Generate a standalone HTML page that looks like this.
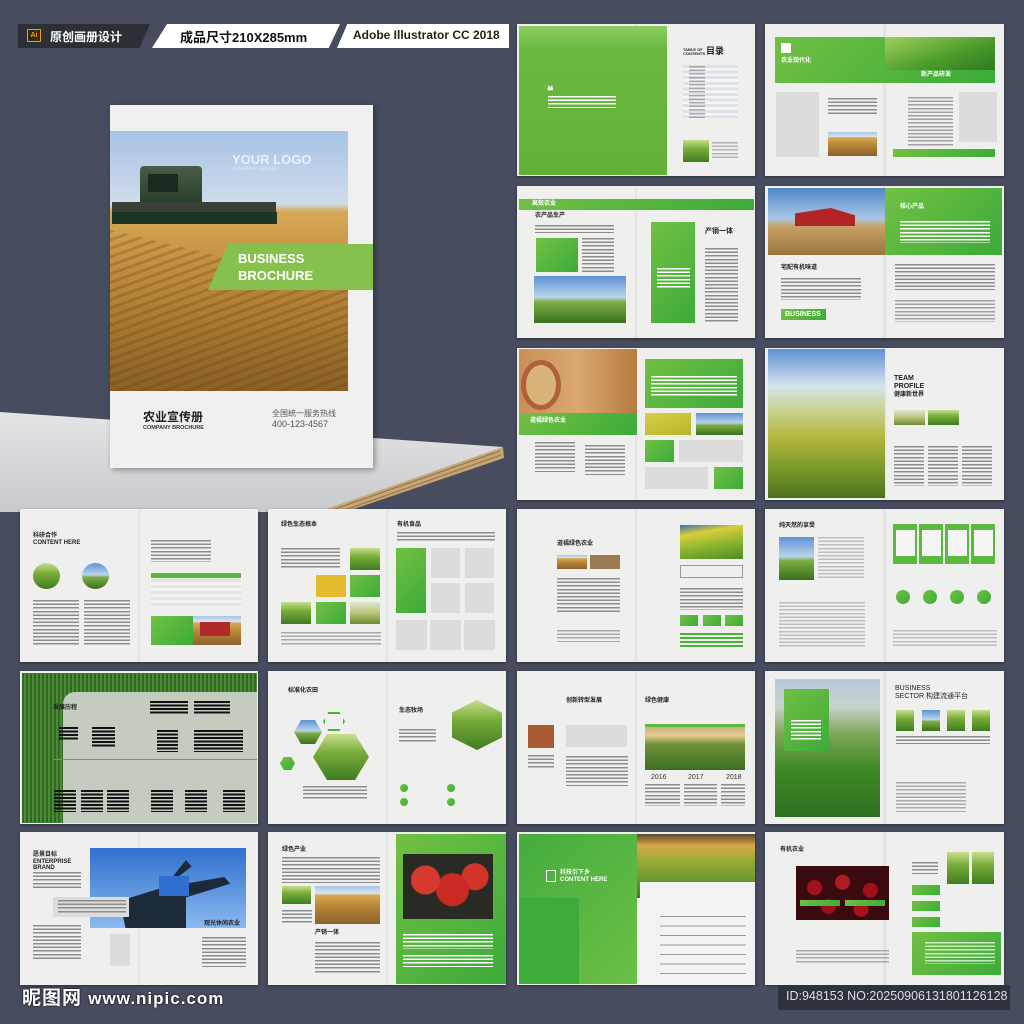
<!DOCTYPE html>
<html><head><meta charset="utf-8"><style>
*{margin:0;padding:0;box-sizing:border-box}
body{width:1024px;height:1024px;background:#474d5e;position:relative;overflow:hidden;font-family:"Liberation Sans","Noto Sans CJK SC",sans-serif}
div{position:absolute}
.s{background:#efefed;box-shadow:0 1px 3px rgba(0,0,0,.4)}
.s:after{content:"";position:absolute;left:49%;top:0;width:2%;height:100%;background:linear-gradient(90deg,rgba(0,0,0,0),rgba(0,0,0,.06),rgba(0,0,0,0))}
.ln{background:repeating-linear-gradient(#8c8c8c 0 1.5px,transparent 1.5px 3.6px)}
.lw{background:repeating-linear-gradient(#fff 0 1.5px,transparent 1.5px 3.6px)}
.bk{background:repeating-linear-gradient(#111 0 2px,transparent 2px 3.5px)}
.g{background:linear-gradient(135deg,#72c043,#3cab3a)}
.gy{background:#dcdcdc}
.t{font-size:6px;font-weight:bold;color:#222;white-space:nowrap;line-height:1.1}
.wheat{background:linear-gradient(#a8c6e6,#d9e4ee 20%,#d8a84e 24%,#b78537 55%,#8b6130)}
.fld{background:linear-gradient(#c9de8f,#79ad3a 40%,#3f7c22)}
.sky{background:linear-gradient(#5e93d4,#bad3ec 45%,#7fae43 55%,#386f20)}
.photo2{background:linear-gradient(#dfe6d0,#b9c57a 50%,#6f8a32)}
</style></head><body>

<!-- header -->
<div style="left:18px;top:24px;width:132px;height:24px;background:#2c2f36;clip-path:polygon(0 0,100% 0,92% 100%,0 100%)"></div>
<div style="left:27px;top:29px;width:14px;height:13px;background:#3a2a10;border:1px solid #f49a1d;color:#f49a1d;font-size:7px;font-weight:bold;text-align:center;line-height:11px">Ai</div>
<div style="left:50px;top:28px;color:#fff;font-size:12px;font-weight:bold">原创画册设计</div>
<div style="left:152px;top:24px;width:188px;height:24px;background:#fff;clip-path:polygon(8% 0,100% 0,94% 100%,0 100%)"></div>
<div style="left:180px;top:27px;color:#111;font-size:13px;font-weight:bold">成品尺寸210X285mm</div>
<div style="left:337px;top:24px;width:172px;height:24px;background:#fff;clip-path:polygon(6% 0,100% 0,100% 100%,0 100%)"></div>
<div style="left:353px;top:28px;color:#2a2210;font-size:12px;font-weight:bold">Adobe Illustrator CC 2018</div>

<!-- table -->
<svg style="position:absolute;left:0;top:0" width="1024" height="1024">
<defs><linearGradient id="tb" x1="0" y1="0" x2="0" y2="1"><stop offset="0" stop-color="#e4e5e7"/><stop offset="1" stop-color="#c9cacd"/></linearGradient></defs>
<polygon points="0,412 503,447 340,512 0,512" fill="url(#tb)"/>
<polygon points="503,447 504,458 345,512 318,512" fill="#c7a673"/>
<line x1="500" y1="451" x2="335" y2="509" stroke="#8a7150" stroke-width="1"/>
<line x1="501" y1="455" x2="342" y2="511" stroke="#8a7150" stroke-width="1"/>
</svg>

<!-- cover -->
<div style="left:110px;top:105px;width:263px;height:363px;background:#f0f0f0;box-shadow:2px 2px 6px rgba(0,0,0,.35)"></div>
<div style="left:110px;top:131px;width:238px;height:260px;background:linear-gradient(#a6c3e6,#d0dcea 28%,#d7aa55 31%,#c49042 50%,#a8782f 75%,#8a6028)"></div>
<div style="left:110px;top:131px;width:238px;height:260px;background:repeating-linear-gradient(160deg,transparent 0 5px,rgba(90,60,20,.25) 5px 8px);clip-path:polygon(0 38%,100% 60%,100% 100%,0 100%)"></div>
<div style="left:140px;top:166px;width:62px;height:40px;background:linear-gradient(#4a5a48,#24402a);border-radius:4px 4px 0 0"></div>
<div style="left:148px;top:174px;width:30px;height:18px;background:#1a2a1e"></div>
<div style="left:112px;top:202px;width:164px;height:10px;background:#3a4038"></div>
<div style="left:112px;top:212px;width:165px;height:12px;background:#1f3524"></div>
<div style="left:232px;top:152px;color:#fff;opacity:.7;font-size:13px;font-weight:bold">YOUR LOGO</div>
<div style="left:234px;top:166px;color:#fff;opacity:.5;font-size:6px">Creative Design</div>
<div style="left:208px;top:244px;width:165px;height:46px;background:#86c04d;clip-path:polygon(12% 0,100% 0,100% 100%,0 100%)"></div>
<div style="left:238px;top:250px;color:#fff;font-size:13px;font-weight:bold;line-height:17px">BUSINESS<br>BROCHURE</div>
<div style="left:143px;top:411px;color:#222;font-size:12px;font-weight:bold;line-height:13px">农业宣传册</div>
<div style="left:143px;top:425px;color:#333;font-size:5.5px;font-weight:bold;line-height:6px">COMPANY BROCHURE</div>
<div style="left:272px;top:409px;color:#555;font-size:8px;line-height:9px">全国统一服务热线</div>
<div style="left:272px;top:419px;color:#555;font-size:9px;line-height:10px">400-123-4567</div>

<!-- S1 -->
<div class="s" style="left:517px;top:24px;width:238px;height:152px"></div>
<div style="left:519px;top:26px;width:148px;height:149px;background:linear-gradient(#8fcc63,#6ab940 15%,#62b23a)"></div>
<div style="left:547px;top:84px;color:#fff;font-size:12px;font-weight:bold">❝</div>
<div class="lw" style="left:548px;top:96px;width:68px;height:12px"></div>
<div class="t" style="left:683px;top:48px;font-size:4px">TABLE OF<br>CONTENTS</div>
<div class="t" style="left:706px;top:47px;font-size:9px">目录</div>
<div style="left:683px;top:65px;width:55px;height:53px;background:repeating-linear-gradient(#dfe1e8 0 3px,#f5f5f5 3px 5.6px)"></div>
<div class="ln" style="left:689px;top:66px;width:16px;height:52px;opacity:.7"></div>
<div style="left:683px;top:140px;width:26px;height:22px" class="fld"></div>
<div class="ln" style="left:712px;top:142px;width:26px;height:18px;opacity:.6"></div>

<!-- S2 -->
<div class="s" style="left:765px;top:24px;width:239px;height:152px"></div>
<div class="g" style="left:775px;top:37px;width:220px;height:46px"></div>
<div style="left:885px;top:37px;width:110px;height:33px;background:linear-gradient(160deg,#9fd05a,#4a9a2a 60%,#2f7a20)"></div>
<div style="left:781px;top:43px;width:10px;height:10px;background:#fff"></div>
<div class="t" style="left:781px;top:58px;color:#fff">农业现代化</div>
<div class="t" style="left:921px;top:72px;color:#fff">新产品研发</div>
<div class="gy" style="left:776px;top:92px;width:43px;height:65px"></div>
<div class="ln" style="left:828px;top:98px;width:49px;height:18px"></div>
<div class="wheat" style="left:828px;top:132px;width:49px;height:24px"></div>
<div class="ln" style="left:908px;top:97px;width:45px;height:50px;opacity:.8"></div>
<div class="gy" style="left:959px;top:92px;width:38px;height:50px"></div>
<div class="g" style="left:893px;top:149px;width:102px;height:8px"></div>

<!-- S3 -->
<div class="s" style="left:517px;top:186px;width:238px;height:152px"></div>
<div class="g" style="left:519px;top:199px;width:235px;height:11px"></div>
<div class="t" style="left:532px;top:201px;color:#fff">高效农业</div>
<div class="t" style="left:535px;top:213px">农产品生产</div>
<div class="ln" style="left:535px;top:225px;width:79px;height:8px"></div>
<div class="g" style="left:536px;top:238px;width:42px;height:34px"></div>
<div class="ln" style="left:582px;top:238px;width:32px;height:34px"></div>
<div class="sky" style="left:534px;top:276px;width:92px;height:47px"></div>
<div class="g" style="left:651px;top:222px;width:44px;height:101px"></div>
<div class="lw" style="left:657px;top:268px;width:33px;height:20px"></div>
<div class="t" style="left:705px;top:228px;font-size:7px">产销一体</div>
<div class="ln" style="left:705px;top:248px;width:33px;height:75px"></div>

<!-- S4 -->
<div class="s" style="left:765px;top:186px;width:239px;height:152px"></div>
<div style="left:768px;top:188px;width:117px;height:67px;background:linear-gradient(#4f86c8,#a9c6e4 45%,#c8a063 58%,#9b7540)"></div>
<div style="left:795px;top:208px;width:60px;height:18px;background:#b32424;clip-path:polygon(0 30%,60% 0,100% 40%,100% 100%,0 100%)"></div>
<div class="g" style="left:885px;top:188px;width:117px;height:67px"></div>
<div class="t" style="left:900px;top:204px;color:#fff">核心产品</div>
<div class="lw" style="left:900px;top:221px;width:90px;height:22px"></div>
<div class="t" style="left:781px;top:265px">宅配有机味道</div>
<div class="ln" style="left:781px;top:278px;width:80px;height:22px"></div>
<div class="g" style="left:781px;top:309px;width:45px;height:11px"></div>
<div class="t" style="left:785px;top:311px;color:#fff;font-size:7px">BUSINESS</div>
<div class="ln" style="left:895px;top:264px;width:100px;height:26px"></div>
<div class="ln" style="left:895px;top:300px;width:100px;height:22px;opacity:.8"></div>

<!-- S5 -->
<div class="s" style="left:517px;top:348px;width:238px;height:152px"></div>
<div style="left:519px;top:349px;width:118px;height:64px;background:linear-gradient(90deg,#c89055,#d9a870 50%,#b67b3f)"></div>
<div style="left:521px;top:360px;width:40px;height:50px;border-radius:50%;background:#d9b47a;border:5px solid #b0603a"></div>
<div class="g" style="left:519px;top:413px;width:118px;height:22px"></div>
<div class="t" style="left:530px;top:418px;color:#fff">道福绿色农业</div>
<div class="ln" style="left:535px;top:442px;width:40px;height:30px"></div>
<div class="ln" style="left:585px;top:445px;width:40px;height:30px"></div>
<div class="g" style="left:645px;top:359px;width:98px;height:49px"></div>
<div class="lw" style="left:651px;top:376px;width:86px;height:20px"></div>
<div style="left:645px;top:413px;width:46px;height:22px;background:linear-gradient(160deg,#d7d04a,#b5b52a)"></div>
<div class="sky" style="left:696px;top:413px;width:47px;height:22px"></div>
<div class="g" style="left:645px;top:440px;width:29px;height:22px"></div>
<div class="gy" style="left:679px;top:440px;width:64px;height:22px"></div>
<div class="gy" style="left:645px;top:467px;width:63px;height:22px"></div>
<div class="g" style="left:714px;top:467px;width:29px;height:22px"></div>

<!-- S6 -->
<div class="s" style="left:765px;top:348px;width:239px;height:152px"></div>
<div style="left:768px;top:349px;width:117px;height:149px;background:linear-gradient(#5f92cf,#d7e4ef 25%,#c9d494 40%,#b3b63c 60%,#7a9a2a 80%,#4c6f20)"></div>
<div class="t" style="left:894px;top:375px;font-size:7px">TEAM<br>PROFILE</div>
<div class="t" style="left:894px;top:392px">健康新世界</div>
<div class="photo2" style="left:894px;top:410px;width:31px;height:15px"></div>
<div class="fld" style="left:928px;top:410px;width:31px;height:15px"></div>
<div class="ln" style="left:894px;top:446px;width:30px;height:40px"></div>
<div class="ln" style="left:928px;top:446px;width:30px;height:40px"></div>
<div class="ln" style="left:962px;top:446px;width:30px;height:40px"></div>

<!-- S7 -->
<div class="s" style="left:20px;top:509px;width:238px;height:153px"></div>
<div class="t" style="left:33px;top:533px">科研合作<br>CONTENT HERE</div>
<div class="fld" style="left:33px;top:563px;width:27px;height:26px;border-radius:50%"></div>
<div class="sky" style="left:82px;top:563px;width:27px;height:26px;border-radius:50%"></div>
<div class="ln" style="left:33px;top:600px;width:46px;height:45px"></div>
<div class="ln" style="left:84px;top:600px;width:46px;height:45px"></div>
<div class="ln" style="left:151px;top:540px;width:60px;height:22px"></div>
<div style="left:151px;top:573px;width:90px;height:5px;background:#5db63c"></div>
<div style="left:151px;top:579px;width:90px;height:30px;background:repeating-linear-gradient(#e4e4e4 0 3px,#f3f3f3 3px 6px)"></div>
<div class="g" style="left:151px;top:616px;width:42px;height:29px"></div>
<div class="wheat" style="left:193px;top:616px;width:48px;height:29px"></div>
<div style="left:200px;top:622px;width:30px;height:14px;background:#b02a2a"></div>

<!-- S8 -->
<div class="s" style="left:268px;top:509px;width:238px;height:153px"></div>
<div class="t" style="left:281px;top:522px">绿色生态根本</div>
<div class="ln" style="left:281px;top:548px;width:59px;height:20px"></div>
<div class="fld" style="left:350px;top:548px;width:30px;height:22px"></div>
<div style="left:316px;top:575px;width:30px;height:22px;background:#e4bb2c"></div>
<div class="g" style="left:350px;top:575px;width:30px;height:22px"></div>
<div class="fld" style="left:281px;top:602px;width:30px;height:22px"></div>
<div class="g" style="left:316px;top:602px;width:30px;height:22px"></div>
<div class="photo2" style="left:350px;top:602px;width:30px;height:22px"></div>
<div class="ln" style="left:281px;top:632px;width:100px;height:14px;opacity:.7"></div>
<div class="t" style="left:397px;top:522px">有机食品</div>
<div class="ln" style="left:397px;top:532px;width:98px;height:10px"></div>
<div class="g" style="left:396px;top:548px;width:30px;height:65px"></div>
<div class="gy" style="left:431px;top:548px;width:29px;height:30px"></div>
<div class="gy" style="left:465px;top:548px;width:29px;height:30px"></div>
<div class="gy" style="left:431px;top:583px;width:29px;height:30px"></div>
<div class="gy" style="left:465px;top:583px;width:29px;height:30px"></div>
<div class="gy" style="left:396px;top:620px;width:31px;height:30px"></div>
<div class="gy" style="left:430px;top:620px;width:31px;height:30px"></div>
<div class="gy" style="left:464px;top:620px;width:31px;height:30px"></div>

<!-- S9 -->
<div class="s" style="left:517px;top:509px;width:238px;height:153px"></div>
<div class="t" style="left:557px;top:541px">道福绿色农业</div>
<div class="wheat" style="left:557px;top:555px;width:30px;height:14px"></div>
<div style="left:590px;top:555px;width:30px;height:14px;background:#9b7c52"></div>
<div class="ln" style="left:557px;top:578px;width:63px;height:36px"></div>
<div class="ln" style="left:557px;top:630px;width:63px;height:12px;opacity:.7"></div>
<div style="left:680px;top:525px;width:63px;height:34px;background:linear-gradient(170deg,#3d6fb4,#d7cf3a 25%,#8ab330 60%,#4e8a25)"></div>
<div style="left:680px;top:565px;width:63px;height:13px;border:1px solid #999"></div>
<div class="ln" style="left:680px;top:588px;width:63px;height:22px"></div>
<div class="g" style="left:680px;top:615px;width:18px;height:11px"></div>
<div class="g" style="left:703px;top:615px;width:18px;height:11px"></div>
<div class="g" style="left:725px;top:615px;width:18px;height:11px"></div>
<div style="left:680px;top:633px;width:63px;height:16px;background:repeating-linear-gradient(#4bb03c 0 2px,transparent 2px 4px)"></div>

<!-- S10 -->
<div class="s" style="left:765px;top:509px;width:239px;height:153px"></div>
<div class="t" style="left:779px;top:523px">纯天然的享受</div>
<div class="sky" style="left:779px;top:537px;width:35px;height:43px"></div>
<div class="ln" style="left:818px;top:537px;width:46px;height:43px;opacity:.5"></div>
<div class="ln" style="left:779px;top:602px;width:86px;height:45px;opacity:.5"></div>
<div style="left:893px;top:524px;width:104px;height:40px;background:repeating-linear-gradient(90deg,#5cb83f 0 24px,transparent 24px 26px)"></div>
<div style="left:896px;top:530px;width:98px;height:26px;background:repeating-linear-gradient(90deg,#f4f4f4 0 19px,transparent 19px 26px)"></div>
<div class="g" style="left:896px;top:590px;width:14px;height:14px;border-radius:50%"></div>
<div class="g" style="left:923px;top:590px;width:14px;height:14px;border-radius:50%"></div>
<div class="g" style="left:950px;top:590px;width:14px;height:14px;border-radius:50%"></div>
<div class="g" style="left:977px;top:590px;width:14px;height:14px;border-radius:50%"></div>
<div class="ln" style="left:893px;top:630px;width:104px;height:18px;opacity:.5"></div>

<!-- S11 -->
<div class="s" style="left:20px;top:671px;width:238px;height:153px"></div>
<div style="left:22px;top:673px;width:235px;height:150px;background:repeating-linear-gradient(90deg,#2f6a25 0 2px,#4e8a35 2px 4px)"></div>
<div style="left:63px;top:692px;width:194px;height:131px;background:#c4ccc0;border-radius:12px 0 0 0"></div>
<div class="t" style="left:53px;top:705px">发展历程</div>
<div class="bk" style="left:150px;top:701px;width:38px;height:14px"></div>
<div class="bk" style="left:194px;top:701px;width:36px;height:14px"></div>
<div class="bk" style="left:59px;top:727px;width:19px;height:14px"></div>
<div class="bk" style="left:92px;top:727px;width:23px;height:20px"></div>
<div class="bk" style="left:157px;top:730px;width:21px;height:22px"></div>
<div class="bk" style="left:194px;top:730px;width:49px;height:22px"></div>
<div style="left:54px;top:759px;width:203px;height:1px;background:#888"></div>
<div class="bk" style="left:54px;top:790px;width:22px;height:22px"></div>
<div class="bk" style="left:81px;top:790px;width:22px;height:22px"></div>
<div class="bk" style="left:107px;top:790px;width:22px;height:22px"></div>
<div class="bk" style="left:151px;top:790px;width:22px;height:22px"></div>
<div class="bk" style="left:185px;top:790px;width:22px;height:22px"></div>
<div class="bk" style="left:223px;top:790px;width:22px;height:22px"></div>

<!-- S12 -->
<div class="s" style="left:268px;top:671px;width:238px;height:153px"></div>
<div class="t" style="left:288px;top:688px">标准化农田</div>
<div class="sky" style="left:294px;top:720px;width:28px;height:24px;clip-path:polygon(25% 0,75% 0,100% 50%,75% 100%,25% 100%,0 50%)"></div>
<div style="left:323px;top:712px;width:22px;height:19px;border:2px solid #4bb03c;clip-path:polygon(25% 0,75% 0,100% 50%,75% 100%,25% 100%,0 50%)"></div>
<div class="fld" style="left:313px;top:734px;width:56px;height:46px;clip-path:polygon(25% 0,75% 0,100% 50%,75% 100%,25% 100%,0 50%)"></div>
<div class="g" style="left:280px;top:757px;width:15px;height:13px;clip-path:polygon(25% 0,75% 0,100% 50%,75% 100%,25% 100%,0 50%)"></div>
<div class="ln" style="left:303px;top:786px;width:64px;height:14px"></div>
<div class="t" style="left:399px;top:708px">生态牧场</div>
<div class="ln" style="left:399px;top:729px;width:37px;height:14px"></div>
<div class="fld" style="left:452px;top:700px;width:50px;height:50px;clip-path:polygon(50% 0,100% 25%,100% 75%,50% 100%,0 75%,0 25%)"></div>
<div class="g" style="left:400px;top:784px;width:8px;height:8px;border-radius:50%"></div>
<div class="g" style="left:447px;top:784px;width:8px;height:8px;border-radius:50%"></div>
<div class="g" style="left:400px;top:798px;width:8px;height:8px;border-radius:50%"></div>
<div class="g" style="left:447px;top:798px;width:8px;height:8px;border-radius:50%"></div>

<!-- S13 -->
<div class="s" style="left:517px;top:671px;width:238px;height:153px"></div>
<div class="t" style="left:566px;top:698px">创新转型发展</div>
<div class="t" style="left:645px;top:698px">绿色健康</div>
<div style="left:528px;top:725px;width:26px;height:23px;background:#a85a32"></div>
<div class="gy" style="left:566px;top:725px;width:61px;height:22px"></div>
<div class="ln" style="left:566px;top:756px;width:62px;height:30px"></div>
<div class="ln" style="left:528px;top:755px;width:26px;height:14px"></div>
<div style="left:645px;top:724px;width:100px;height:3px;background:#5cb83f"></div>
<div style="left:645px;top:727px;width:100px;height:43px;background:linear-gradient(#c9b38c,#e4cc8a 20%,#71913a 40%,#3d6e22)"></div>
<div style="left:651px;top:774px;font-size:7px;color:#333">2016</div>
<div style="left:688px;top:774px;font-size:7px;color:#333">2017</div>
<div style="left:726px;top:774px;font-size:7px;color:#333">2018</div>
<div class="ln" style="left:645px;top:784px;width:100px;height:22px"></div>
<div style="left:680px;top:784px;width:4px;height:22px;background:#efefed"></div>
<div style="left:717px;top:784px;width:4px;height:22px;background:#efefed"></div>

<!-- S14 -->
<div class="s" style="left:765px;top:671px;width:239px;height:153px"></div>
<div style="left:775px;top:679px;width:105px;height:138px;background:linear-gradient(#b7c8d9,#c9d3d0 20%,#7fa458 40%,#3f8a28 65%,#2f6e20)"></div>
<div class="g" style="left:784px;top:689px;width:45px;height:62px"></div>
<div class="lw" style="left:791px;top:720px;width:30px;height:20px"></div>
<div class="t" style="left:895px;top:685px;font-size:7px;font-weight:normal">BUSINESS<br>SECTOR 构建流通平台</div>
<div class="fld" style="left:896px;top:710px;width:18px;height:21px"></div>
<div class="sky" style="left:922px;top:710px;width:18px;height:21px"></div>
<div class="fld" style="left:947px;top:710px;width:18px;height:21px"></div>
<div class="fld" style="left:972px;top:710px;width:18px;height:21px"></div>
<div class="ln" style="left:896px;top:736px;width:94px;height:8px"></div>
<div class="ln" style="left:896px;top:782px;width:70px;height:30px;opacity:.7"></div>

<!-- S15 -->
<div class="s" style="left:20px;top:832px;width:238px;height:153px"></div>
<div class="t" style="left:33px;top:852px">愿景目标<br>ENTERPRISE<br>BRAND</div>
<div class="ln" style="left:33px;top:872px;width:48px;height:16px"></div>
<div style="left:90px;top:848px;width:156px;height:80px;background:linear-gradient(#2f6fcf,#8cb9ee)"></div>
<div style="left:120px;top:860px;width:110px;height:68px;background:#1d2a3a;clip-path:polygon(60% 0,65% 10%,40% 40%,95% 25%,100% 35%,60% 55%,60% 100%,5% 100%,0 60%,40% 40%)"></div>
<div style="left:159px;top:876px;width:30px;height:20px;background:#2e6fd0"></div>
<div class="gy" style="left:53px;top:897px;width:76px;height:20px"></div>
<div class="ln" style="left:58px;top:900px;width:68px;height:14px"></div>
<div class="t" style="left:204px;top:921px">观光休闲农业</div>
<div class="ln" style="left:202px;top:937px;width:44px;height:30px"></div>
<div class="ln" style="left:33px;top:925px;width:48px;height:35px"></div>
<div class="gy" style="left:110px;top:934px;width:20px;height:32px"></div>

<!-- S16 -->
<div class="s" style="left:268px;top:832px;width:238px;height:153px"></div>
<div class="t" style="left:282px;top:847px">绿色产业</div>
<div class="ln" style="left:282px;top:857px;width:98px;height:26px"></div>
<div class="fld" style="left:282px;top:886px;width:29px;height:18px"></div>
<div class="wheat" style="left:315px;top:886px;width:65px;height:38px"></div>
<div class="ln" style="left:282px;top:910px;width:30px;height:14px"></div>
<div class="t" style="left:315px;top:930px">产销一体</div>
<div class="ln" style="left:315px;top:942px;width:65px;height:32px"></div>
<div class="g" style="left:396px;top:834px;width:110px;height:150px"></div>
<div style="left:403px;top:854px;width:90px;height:65px;background:radial-gradient(circle at 25% 40%,#d63a2e 0 14px,transparent 15px),radial-gradient(circle at 55% 55%,#c92a24 0 16px,transparent 17px),radial-gradient(circle at 80% 35%,#d2342a 0 13px,transparent 14px),#2a2a24"></div>
<div class="lw" style="left:403px;top:934px;width:90px;height:15px"></div>
<div class="lw" style="left:403px;top:955px;width:90px;height:12px"></div>

<!-- S17 -->
<div class="s" style="left:517px;top:832px;width:238px;height:153px"></div>
<div style="left:519px;top:834px;width:118px;height:150px;background:linear-gradient(135deg,#44ad3e,#6dbf46)"></div>
<div style="left:519px;top:898px;width:60px;height:86px;background:#3daa3a"></div>
<div style="left:546px;top:870px;width:10px;height:12px;border:1.5px solid #fff"></div>
<div class="t" style="left:560px;top:870px;color:#fff">科技引下乡<br>CONTENT HERE</div>
<div style="left:637px;top:834px;width:118px;height:64px;background:linear-gradient(#5a4a2a,#d9a548 18%,#a8ad3c 35%,#6d9a30 70%,#3f7a22)"></div>
<div style="left:640px;top:882px;width:115px;height:103px;background:#f3f3f3"></div>
<div class="ln" style="left:660px;top:910px;width:86px;height:65px;background:repeating-linear-gradient(transparent 0 6px,#999 6px 7px,transparent 7px 9.5px)"></div>

<!-- S18 -->
<div class="s" style="left:765px;top:832px;width:239px;height:153px"></div>
<div class="t" style="left:780px;top:847px">有机农业</div>
<div style="left:796px;top:866px;width:93px;height:54px;background:radial-gradient(circle at 20% 40%,#a3121c 0 7px,transparent 8px),radial-gradient(circle at 50% 30%,#b01a22 0 7px,transparent 8px),radial-gradient(circle at 80% 45%,#a0101a 0 7px,transparent 8px),radial-gradient(circle at 35% 75%,#9a1018 0 7px,transparent 8px),radial-gradient(circle at 70% 80%,#a8141d 0 7px,transparent 8px),#3a0a0e"></div>
<div class="g" style="left:800px;top:900px;width:40px;height:6px"></div>
<div class="g" style="left:845px;top:900px;width:40px;height:6px"></div>
<div class="ln" style="left:796px;top:950px;width:93px;height:14px;opacity:.7"></div>
<div class="ln" style="left:912px;top:862px;width:26px;height:12px"></div>
<div class="fld" style="left:947px;top:852px;width:22px;height:32px"></div>
<div class="fld" style="left:972px;top:852px;width:22px;height:32px"></div>
<div class="g" style="left:912px;top:885px;width:28px;height:10px"></div>
<div class="g" style="left:912px;top:901px;width:28px;height:10px"></div>
<div class="g" style="left:912px;top:917px;width:28px;height:10px"></div>
<div class="g" style="left:912px;top:932px;width:89px;height:43px"></div>
<div class="lw" style="left:925px;top:942px;width:70px;height:22px;opacity:.7"></div>

<!-- footer -->
<div style="left:22px;top:983px;color:#fff;font-size:19px;font-weight:bold;letter-spacing:1px;text-shadow:0 0 2px #000">昵图网 <span style="font-size:17px">www.nipic.com</span></div>
<div style="left:778px;top:985px;width:232px;height:25px;background:#2e323b"></div>
<div style="left:786px;top:989px;color:#dde;font-size:12.5px;font-family:'Liberation Sans Narrow','Liberation Sans',sans-serif">ID:948153 NO:20250906131801126128</div>
</body></html>
